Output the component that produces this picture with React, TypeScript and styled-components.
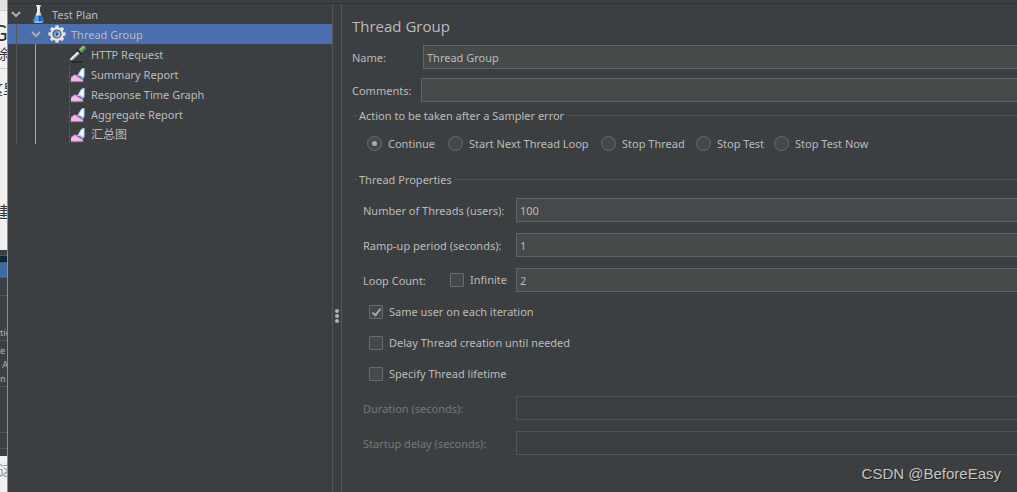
import React from "react";
import styled, { createGlobalStyle } from "styled-components";

const GlobalStyle = createGlobalStyle`
  *, *::before, *::after { box-sizing: border-box; }
  body {
    margin: 0;
    background: #3c3f41;
    color: #bbbbbb;
    font: 11px/20px "Noto Sans", "Noto Sans CJK SC", sans-serif;
    overflow: hidden;
  }
  input { font: inherit; color: inherit; }
`;

const Screen = styled.div`
  display: flex;
  min-height: 100vh;
`;

/* Sliver of the windows behind the application */
const Backdrop = styled.div`
  flex: 0 0 8px;
  height: 100vh;
  overflow: hidden;
  background: #f0f0f0;
  display: flex;
  flex-direction: column;
  border-right: 1px solid #8b8d8e;
  font-family: "Noto Sans CJK SC", sans-serif;
  white-space: nowrap;
  color: #333333;
`;

const Page = styled.div<{ $height: number; $bg?: string; $line?: boolean }>`
  flex: 0 0 ${(p) => p.$height}px;
  overflow: hidden;
  display: flex;
  flex-direction: column;
  align-items: flex-end;
  background: ${(p) => p.$bg || "#f0f0f0"};
  border-bottom: ${(p) => (p.$line ? "1px solid #cfcfcf" : "0")};
`;

const Glyph = styled.span<{ $size: number; $shift: number; $top: number; $pale?: boolean }>`
  font-size: ${(p) => p.$size}px;
  line-height: ${(p) => p.$size + 4}px;
  margin-top: ${(p) => p.$top}px;
  margin-right: -${(p) => p.$shift}px;
  color: ${(p) => (p.$pale ? "#999999" : "#333333")};
`;

const DarkWindow = styled.div`
  flex: 0 0 206px;
  overflow: hidden;
  background: #3c3f41;
  color: #b4b4b4;
  font: 9px/14px "Noto Sans", sans-serif;
  display: flex;
  flex-direction: column;
`;

const Band = styled.div<{ $height: number; $bg?: string }>`
  flex: 0 0 ${(p) => p.$height}px;
  background: ${(p) => p.$bg || "transparent"};
  border-bottom: 1px solid #55585a;
  display: flex;
  flex-direction: column;
  justify-content: flex-end;
`;

const AppWindow = styled.div`
  flex: 1;
  min-width: 0;
  display: flex;
  flex-direction: column;
`;

const ToolbarEdge = styled.div`
  height: 4px;
  border-bottom: 1px solid #323435;
`;

const Split = styled.div`
  flex: 1;
  display: flex;
`;

const Tree = styled.ul`
  flex: 0 0 324px;
  list-style: none;
  margin: 0;
  padding: 0;
`;

const TreeRow = styled.li<{ $selected?: boolean }>`
  height: 20px;
  display: flex;
  align-items: center;
  background: ${(p) => (p.$selected ? "#4b6eaf" : "transparent")};
`;

const TreeText = styled.span<{ $cjk?: boolean }>`
  padding-top: 1px;
  font-size: ${(p) => (p.$cjk ? 12 : 11)}px;
`;

const Guide = styled.span<{ $color?: string; $first?: boolean }>`
  flex: 0 0 ${(p) => (p.$first ? 17 : 20)}px;
  height: 20px;
  display: flex;
  justify-content: ${(p) => (p.$first ? "center" : "flex-start")};
  align-items: center;
  &::before {
    content: "";
    width: 1px;
    height: 20px;
    margin-left: ${(p) => (p.$first ? 0 : 10)}px;
    background: ${(p) => p.$color || "#55585a"};
  }
`;

const Indent = styled.span<{ $width: number }>`
  flex: 0 0 ${(p) => p.$width}px;
`;

const Arrow = styled.svg`
  flex: 0 0 10px;
  margin: 0 5px 0 3px;
  height: 10px;
`;

const IconBox = styled.svg`
  flex: 0 0 18px;
  width: 18px;
  height: 18px;
  margin: 0 5px 0 2px;
`;

const Divider = styled.div`
  flex: 0 0 10px;
  border-left: 1px solid #555555;
  border-right: 1px solid #555555;
  display: flex;
  flex-direction: column;
  align-items: center;
  padding-top: 305px;
  gap: 1px;
`;

const Dot = styled.span`
  width: 4px;
  height: 4px;
  border-radius: 2px;
  background: #afb1b3;
`;

const Form = styled.form`
  flex: 1;
  min-width: 0;
  padding: 10px 0 0 10px;
`;

const Title = styled.h1`
  margin: 0 0 7px;
  font-family: "Open Sans", sans-serif;
  font-size: 15px;
  line-height: 24px;
  font-weight: 400;
`;

const Field = styled.div<{ $label: number; $bottom: number }>`
  display: grid;
  grid-template-columns: ${(p) => p.$label}px 1fr;
  align-items: center;
  margin-bottom: ${(p) => p.$bottom}px;
`;

const Label = styled.label<{ $disabled?: boolean }>`
  padding-top: 1px;
  color: ${(p) => (p.$disabled ? "#777777" : "#bbbbbb")};
  white-space: nowrap;
`;

const TextInput = styled.input`
  width: 100%;
  min-width: 0;
  height: 24px;
  padding: 1px 3px 0;
  border: 1px solid #646464;
  border-right: 0;
  border-radius: 0;
  background: #45494a;
  outline: none;
  &:disabled {
    background: #3c3f41;
    border-color: #555555;
  }
`;

const Group = styled.fieldset<{ $bottom?: number }>`
  border: 0;
  margin: 0 0 ${(p) => p.$bottom || 0}px;
  padding: 0;
  min-width: 0;
`;

const Legend = styled.legend`
  width: 100%;
  padding: 0 0 0 2px;
  line-height: 19px;
  display: flex;
  align-items: center;
  gap: 2px;
  &::before, &::after {
    content: "";
    height: 1px;
    background: #555555;
  }
  &::before { width: 3px; }
  &::after { flex: 1; }
`;

const RadioRow = styled.div`
  display: flex;
  padding: 9px 0 0 15px;
  line-height: 19px;
`;

const Choice = styled.label<{ $width?: number }>`
  display: inline-flex;
  align-items: center;
  gap: 6px;
  white-space: nowrap;
  flex: 0 0 ${(p) => (p.$width ? p.$width + "px" : "auto")};
`;

const Radio = styled.input`
  appearance: none;
  margin: 0;
  width: 15px;
  height: 15px;
  border: 1px solid #6b6b6b;
  border-radius: 50%;
  background: #43494a;
  display: grid;
  place-items: center;
  &:checked::after {
    content: "";
    width: 5px;
    height: 5px;
    border-radius: 50%;
    background: #adadad;
  }
`;

const Check = styled.input`
  appearance: none;
  margin: 0;
  width: 14px;
  height: 14px;
  border: 1px solid #6b6b6b;
  border-radius: 1px;
  background: #43494a;
  display: grid;
  place-items: center;
  &:checked::after {
    content: "";
    width: 5px;
    height: 9px;
    margin-bottom: 2px;
    border: solid #a7a7a7;
    border-width: 0 2px 2px 0;
    transform: rotate(38deg);
  }
`;

const Properties = styled.div`
  padding: 9px 0 0 11px;
`;

const LoopLabel = styled.div`
  display: grid;
  grid-template-columns: 87px 1fr;
`;

const CheckList = styled.div`
  display: flex;
  flex-direction: column;
  align-items: flex-start;
  gap: 13px;
  padding: 0 0 13px 6px;
  line-height: 18px;
`;

const Watermark = styled.div`
  position: absolute;
  right: 16px;
  bottom: 8px;
  font: 15px/20px "Liberation Sans", Arial, sans-serif;
  color: #c4c4c4;
  text-shadow: 1px 1px 1px #222222;
`;

function Chevron() {
  return (
    <Arrow viewBox="0 0 10 10" fill="none" stroke="#adadad" strokeWidth="2">
      <path d="M1 3l4 4 4-4" />
    </Arrow>
  );
}

function FlaskIcon() {
  return (
    <IconBox viewBox="0 0 18 18">
      <defs>
        <linearGradient id="glass" x1="0" x2="1">
          <stop offset="0" stopColor="#8fa0b0" />
          <stop offset=".45" stopColor="#f3f7fa" />
          <stop offset="1" stopColor="#91a1b2" />
        </linearGradient>
        <linearGradient id="liquid" x1="0" x2="1">
          <stop offset="0" stopColor="#2f86dd" />
          <stop offset=".4" stopColor="#58aaf5" />
          <stop offset=".6" stopColor="#0b5cbc" />
          <stop offset="1" stopColor="#2a7fd6" />
        </linearGradient>
      </defs>
      <path d="M7 0h5v1.500h-1v5l3.500 9q.4 2-1.500 2H6q-1.900 0-1.500-2L8 6.500v-5H7z" fill="url(#glass)" />
      <path d="M6.500 10.500h6l2 5q.4 1.500-1.500 1.500H6q-1.900 0-1.500-1.500z" fill="url(#liquid)" />
      <path d="M5.500 17h8" stroke="#b9dbf8" />
    </IconBox>
  );
}

function GearIcon() {
  return (
    <IconBox viewBox="0 0 18 18">
      <defs>
        <linearGradient id="hub" x1="0" x2="1" y1="0" y2="1">
          <stop offset="0" stopColor="#3a5f9c" />
          <stop offset=".5" stopColor="#8fb2dd" />
          <stop offset="1" stopColor="#e4effb" />
        </linearGradient>
      </defs>
      <g fill="#dcdcda">
        {[0, 45, 90, 135].map((a) => (
          <rect key={a} x="7.200" y="0.300" width="3.600" height="17.400" rx="1" transform={`rotate(${a} 9 9)`} />
        ))}
      </g>
      <circle cx="9" cy="9" r="6.800" fill="#e6e6e3" />
      <circle cx="9" cy="9" r="4" fill="url(#hub)" stroke="#4b5c7c" strokeWidth="1.200" />
      <path d="M8 7l3 2-3 2.500z" fill="#31578f" />
    </IconBox>
  );
}

function DropperIcon() {
  return (
    <IconBox viewBox="0 0 18 18">
      <path d="M4 17h10" stroke="#222425" strokeWidth="1.500" />
      <path d="M.8 16.200l2-3.700 7.200-6.800 2.500 2.500-7.200 6.800z" fill="#b9beba" stroke="#222" strokeWidth=".6" />
      <path d="M2.500 14.500l8-7.700" stroke="#f3f5f3" strokeWidth="1.300" />
      <path d="M9 4.500l4.500 4.500" stroke="#1f2a1c" strokeWidth="1.800" />
      <path d="M10.300 4.800l3.500-3.500q2-1.500 3.500-.2 1.200 1.500-.2 3.500L13.500 8z" fill="#5c9e49" />
      <path d="M12.500 4.500l3-2.700" stroke="#a3d48d" strokeWidth="1.300" />
    </IconBox>
  );
}

function ChartIcon() {
  return (
    <IconBox viewBox="0 0 18 18">
      <path d="M1.500 1v16H17" stroke="#707274" strokeDasharray="1 1" fill="none" />
      <path d="M3 16.500v-4l3-2.500h2l4 3 3 1.500v2z" fill="#f5b4ea" />
      <path d="M3 12.500l3-2.500h2l3 2" stroke="#d665c1" fill="none" />
      <path d="M9 11l3.500-6q1.500-2.500 4-2v8.500l-2 3q-1.500-4-5.500-3.500z" fill="#b8d4f7" />
      <path d="M11.500 9.500l3-5.500 1 .5v7z" fill="#f4f9ff" />
      <path d="M9 11.300q4.500-.3 5.500 3.700l2-3.500" stroke="#5b78b0" fill="none" />
    </IconBox>
  );
}

const reports = ["Summary Report", "Response Time Graph", "Aggregate Report"];
const actions: [string, number][] = [
  ["Continue", 81],
  ["Start Next Thread Loop", 153],
  ["Stop Thread", 95],
  ["Stop Test", 78],
  ["Stop Test Now", 110],
];

function ChildRow({ icon, text, cjk }: { icon: React.ReactNode; text: string; cjk?: boolean }) {
  return (
    <TreeRow>
      <Guide $first />
      <Guide $color="#78b5ef" />
      <Indent $width={21} />
      {icon}
      <TreeText $cjk={cjk}>{text}</TreeText>
    </TreeRow>
  );
}

export default function App() {
  return (
    <>
      <GlobalStyle />
      <Screen>
        <Backdrop aria-hidden="true">
          <Page $height={11} $bg="#e2e2e2" $line />
          <Page $height={58} $line>
            <Glyph $size={22} $shift={1} $top={7}>G</Glyph>
            <Glyph $size={14} $shift={2} $top={0}>除</Glyph>
          </Page>
          <Page $height={181}>
            <Glyph $size={14} $shift={10} $top={10}>这里</Glyph>
            <Glyph $size={16} $shift={3} $top={104}>建</Glyph>
          </Page>
          <DarkWindow>
            <Band $height={6} />
            <Band $height={7} $bg="#082b40" />
            <Band $height={15} $bg="#3d6ba8" />
            <Band $height={18} />
            <Band $height={45}>tio</Band>
            <Band $height={46}>
              <span>e</span>
              <span>&nbsp;A</span>
              <span>n /</span>
            </Band>
            <Band $height={46} />
            <Band $height={16} />
          </DarkWindow>
          <Page $height={36}>
            <Glyph $size={14} $shift={6} $top={4} $pale>这</Glyph>
          </Page>
        </Backdrop>
        <AppWindow>
          <ToolbarEdge />
          <Split>
            <Tree>
              <TreeRow>
                <Chevron />
                <Indent $width={1} />
                <FlaskIcon />
                <TreeText>Test Plan</TreeText>
              </TreeRow>
              <TreeRow $selected>
                <Guide $first />
                <Indent $width={3} />
                <Chevron />
                <GearIcon />
                <TreeText>Thread Group</TreeText>
              </TreeRow>
              <ChildRow icon={<DropperIcon />} text="HTTP Request" />
              {reports.map((r) => (
                <ChildRow key={r} icon={<ChartIcon />} text={r} />
              ))}
              <ChildRow icon={<ChartIcon />} text="汇总图" cjk />
            </Tree>
            <Divider>
              <Dot />
              <Dot />
              <Dot />
            </Divider>
            <Form>
              <Title>Thread Group</Title>
              <Field $label={71} $bottom={9}>
                <Label htmlFor="name">Name:</Label>
                <TextInput id="name" defaultValue="Thread Group" />
              </Field>
              <Field $label={69} $bottom={4}>
                <Label htmlFor="comments">Comments:</Label>
                <TextInput id="comments" />
              </Field>
              <Group $bottom={17}>
                <Legend>Action to be taken after a Sampler error</Legend>
                <RadioRow>
                  {actions.map(([text, width], i) => (
                    <Choice key={text} $width={width}>
                      <Radio type="radio" name="action" defaultChecked={i === 0} />
                      {text}
                    </Choice>
                  ))}
                </RadioRow>
              </Group>
              <Group>
                <Legend>Thread Properties</Legend>
                <Properties>
                  <Field $label={153} $bottom={11}>
                    <Label htmlFor="threads">Number of Threads (users):</Label>
                    <TextInput id="threads" defaultValue="100" />
                  </Field>
                  <Field $label={153} $bottom={11}>
                    <Label htmlFor="ramp">Ramp-up period (seconds):</Label>
                    <TextInput id="ramp" defaultValue="1" />
                  </Field>
                  <Field $label={153} $bottom={11}>
                    <LoopLabel>
                      <Label htmlFor="loops">Loop Count:</Label>
                      <Choice>
                        <Check type="checkbox" />
                        Infinite
                      </Choice>
                    </LoopLabel>
                    <TextInput id="loops" defaultValue="2" />
                  </Field>
                  <CheckList>
                    <Choice>
                      <Check type="checkbox" defaultChecked />
                      Same user on each iteration
                    </Choice>
                    <Choice>
                      <Check type="checkbox" />
                      Delay Thread creation until needed
                    </Choice>
                    <Choice>
                      <Check type="checkbox" />
                      Specify Thread lifetime
                    </Choice>
                  </CheckList>
                  <Field $label={153} $bottom={11}>
                    <Label htmlFor="duration" $disabled>Duration (seconds):</Label>
                    <TextInput id="duration" disabled />
                  </Field>
                  <Field $label={153} $bottom={11}>
                    <Label htmlFor="delay" $disabled>Startup delay (seconds):</Label>
                    <TextInput id="delay" disabled />
                  </Field>
                </Properties>
              </Group>
            </Form>
          </Split>
        </AppWindow>
      </Screen>
      <Watermark>CSDN @BeforeEasy</Watermark>
    </>
  );
}
